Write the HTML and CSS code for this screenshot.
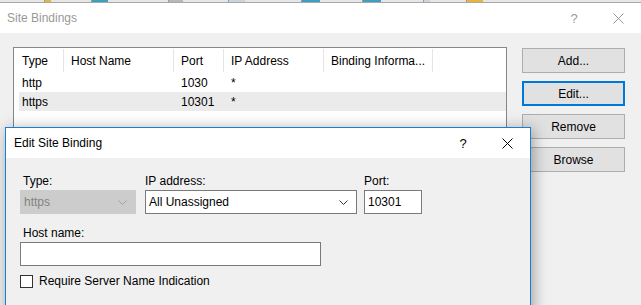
FILE: index.html
```html
<!DOCTYPE html>
<html lang="en">
<head>
    <meta charset="UTF-8">
    <title>Site Bindings</title>
    <link rel="stylesheet" href="styles.css">
</head>
<body>
    <div class="strip">
        <span class="bit sep" style="width:44px"></span>
        <span class="bit gold" style="width:6px"></span>
        <span class="bit sep" style="width:40px"></span>
        <span class="bit globe" style="width:16px"></span>
        <span class="bit sep" style="width:60px"></span>
        <span class="bit grey" style="width:14px"></span>
        <span class="bit sep" style="width:45px"></span>
        <span class="bit pale" style="width:16px"></span>
        <span class="bit sep" style="width:56px"></span>
        <span class="bit globe" style="width:18px"></span>
        <span class="bit sep" style="width:42px"></span>
        <span class="bit globe" style="width:18px"></span>
        <span class="bit sep" style="width:42px"></span>
        <span class="bit pale" style="width:6px"></span>
        <span class="bit sep" style="width:36px"></span>
        <span class="bit gold" style="width:16px"></span>
    </div>

    <div class="window">
        <div class="titlebar">
            <span class="title">Site Bindings</span>
            <span class="caption-btns inactive">
                <span class="help">?</span>
                <svg class="close" width="11" height="11" viewBox="0 0 11 11"><path d="M0.5 0.5 L10.5 10.5 M10.5 0.5 L0.5 10.5" stroke="currentColor" stroke-width="1"/></svg>
            </span>
        </div>
        <div class="win-body">
            <div class="list">
                <div class="list-head">
                    <div class="col">Type</div>
                    <div class="col">Host Name</div>
                    <div class="col">Port</div>
                    <div class="col">IP Address</div>
                    <div class="col">Binding Informa...</div>
                </div>
                <div class="list-row">
                    <div class="cell">http</div>
                    <div class="cell"></div>
                    <div class="cell">1030</div>
                    <div class="cell">*</div>
                    <div class="cell"></div>
                </div>
                <div class="list-row selected">
                    <div class="cell">https</div>
                    <div class="cell"></div>
                    <div class="cell">10301</div>
                    <div class="cell">*</div>
                    <div class="cell"></div>
                </div>
            </div>
            <div class="actions">
                <button class="btn">Add...</button>
                <button class="btn focused">Edit...</button>
                <button class="btn">Remove</button>
                <button class="btn">Browse</button>
            </div>
        </div>
    </div>

    <div class="dialog">
        <div class="titlebar dlg-title">
            <span class="title">Edit Site Binding</span>
            <span class="caption-btns">
                <span class="help">?</span>
                <svg class="close" width="11" height="11" viewBox="0 0 11 11"><path d="M0.5 0.5 L10.5 10.5 M10.5 0.5 L0.5 10.5" stroke="currentColor" stroke-width="1"/></svg>
            </span>
        </div>
        <div class="dlg-body">
            <div class="field-row">
                <div class="field f-type">
                    <label class="indent">Type:</label>
                    <div class="combo disabled">
                        <span>https</span>
                        <svg width="9" height="5" viewBox="0 0 9 5"><polyline points="0.5,0.5 4.5,4.5 8.5,0.5" fill="none" stroke="currentColor"/></svg>
                    </div>
                </div>
                <div class="field f-ip">
                    <label>IP address:</label>
                    <div class="combo">
                        <span>All Unassigned</span>
                        <svg width="9" height="5" viewBox="0 0 9 5"><polyline points="0.5,0.5 4.5,4.5 8.5,0.5" fill="none" stroke="currentColor"/></svg>
                    </div>
                </div>
                <div class="field f-port">
                    <label>Port:</label>
                    <div class="textbox">10301</div>
                </div>
            </div>
            <div class="field f-host">
                <label class="indent">Host name:</label>
                <div class="textbox"></div>
            </div>
            <div class="check-row">
                <span class="checkbox"></span>
                <span>Require Server Name Indication</span>
            </div>
        </div>
    </div>
</body>
</html>
```

FILE: styles.css
```css
body {
    margin: 0;
    background-color: #f0f0f0;
    font-family: "Liberation Sans", Arial, sans-serif;
    font-size: 12px;
    color: #000;
    overflow: hidden;
    height: 305px;
}
.strip {
    display: flex;
    height: 2px;
    background-color: #e6e6e6;
    border-bottom: 1px solid #a8a8a8;
}
.bit { height: 2px; }
.bit.sep { border-right: 1px solid #9a9a9a; }
.bit.gold { background-color: #e8b43c; }
.bit.globe { background-color: #3f9fbf; }
.bit.grey { background-color: #b8b8b8; }
.bit.pale { background-color: #c8d4e0; }

.titlebar {
    display: flex;
    align-items: center;
    height: 30px;
    background-color: #fff;
    padding-left: 7px;
}
.title {
    flex: 1;
    color: #999;
}
.caption-btns {
    display: flex;
    align-items: center;
    color: #000;
}
.caption-btns.inactive { color: #999; }
.help {
    font-size: 13px;
    width: 12px;
    text-align: center;
}
.close { margin-left: 33px; margin-right: 17px; }

.win-body {
    display: flex;
    padding: 14px 0 0 13px;
    height: 260px;
}
.list {
    width: 494px;
    height: 300px;
    background-color: #fff;
    border: 1px solid #828790;
    padding-left: 5px;
    box-sizing: border-box;
}
.list-head, .list-row {
    display: grid;
    grid-template-columns: 45px 110px 50px 100px 109px;
}
.list-head { height: 25px; }
.col {
    display: flex;
    align-items: center;
    padding-left: 7px;
    border-right: 1px solid #e5e5e5;
    margin: 1px 0;
}
.col:first-child, .cell:first-child { padding-left: 3px; }
.list-row { height: 19px; }
.cell {
    display: flex;
    align-items: center;
    padding-left: 7px;
}
.list-row.selected { background-color: #ebebeb; }

.actions {
    display: flex;
    flex-direction: column;
    gap: 8px;
    margin-left: 15px;
    margin-top: 1px;
}
.btn {
    width: 103px;
    height: 25px;
    font-family: inherit;
    font-size: 12px;
    background-color: #e1e1e1;
    border: 1px solid #adadad;
    padding: 0;
    color: #000;
}
.btn.focused { border: 2px solid #0078d7; }

.dialog {
    position: absolute;
    left: 5px;
    top: 127px;
    width: 526px;
    height: 200px;
    border: 1px solid #1a7fd4;
    background-color: #f0f0f0;
    box-sizing: border-box;
    box-shadow: 2px 2px 14px rgba(0, 0, 0, 0.35);
}
.dlg-title { padding-left: 8px; }
.dlg-title .title { color: #000; }

.dlg-body { padding: 16px 0 0 14px; }
.field-row {
    display: flex;
    gap: 9px;
}
.field {
    display: flex;
    flex-direction: column;
    gap: 2px;
}
.field label { height: 14px; line-height: 14px; }
.field label.indent { padding-left: 3px; }
.f-type { width: 116px; }
.f-ip { width: 212px; }
.f-port { width: 58px; margin-left: -2px; }
.f-host { width: 301px; margin-top: 12px; }

.combo, .textbox {
    height: 24px;
    box-sizing: border-box;
    border: 1px solid #7a7a7a;
    background-color: #fff;
    display: flex;
    align-items: center;
    padding: 0 4px 0 3px;
}
.combo span { flex: 1; }
.combo svg { color: #333; margin-right: 4px; }
.combo.disabled {
    background-color: #cccccc;
    border-color: #cccccc;
    color: #838383;
}
.combo.disabled svg { color: #a0a0a0; }

.check-row {
    display: flex;
    align-items: center;
    gap: 6px;
    margin-top: 8px;
}
.checkbox {
    width: 13px;
    height: 13px;
    box-sizing: border-box;
    border: 1px solid #333;
    background-color: #fff;
}
```
